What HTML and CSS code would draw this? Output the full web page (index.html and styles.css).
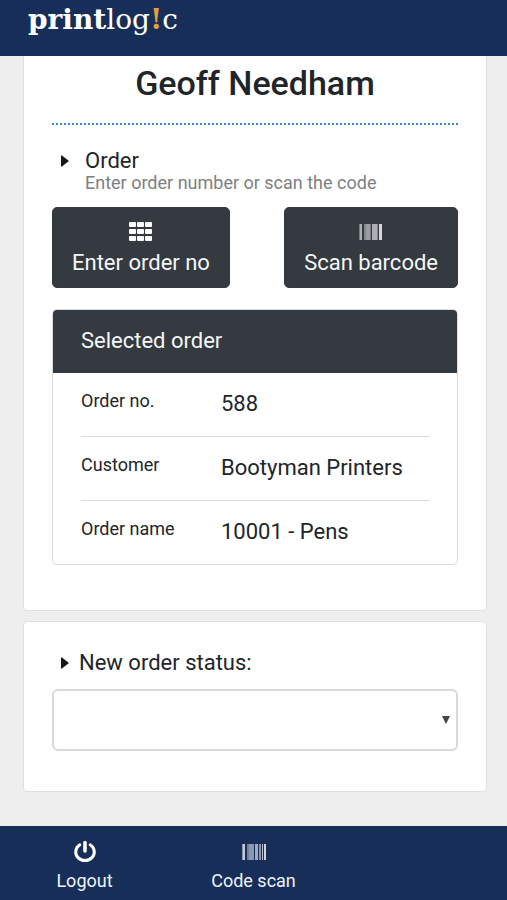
FILE: index.html
```html
<!DOCTYPE html>
<html lang="en">
<head>
<meta charset="utf-8">
<meta name="viewport" content="width=device-width, initial-scale=1">
<title>printlogic</title>
<link rel="stylesheet" href="styles.css">
</head>
<body>
<header class="topbar">
  <a class="logo" href="#"><b>print</b>log<b class="logo-mark">!</b>c</a>
</header>
<main class="content">
  <section class="card card-order">
    <h1 class="user-name">Geoff Needham</h1>
    <div class="step">
      <svg class="caret" viewBox="0 0 8 12" aria-hidden="true"><path d="M0 .8Q0 0 .9 .4L7.4 5.4Q8 6 7.4 6.6L.9 11.6Q0 12 0 11.2Z"/></svg>
      <h2 class="step-title">Order</h2>
      <p class="step-hint">Enter order number or scan the code</p>
    </div>
    <div class="actions">
      <button class="action" type="button">
        <svg class="icon" viewBox="0 0 24 20" aria-hidden="true">
          <g fill="#fff">
            <rect x="0" y="0" width="7" height="5" rx="1"/><rect x="8" y="0" width="7" height="5" rx="1"/><rect x="16" y="0" width="7" height="5" rx="1"/>
            <rect x="0" y="7" width="7" height="5" rx="1"/><rect x="8" y="7" width="7" height="5" rx="1"/><rect x="16" y="7" width="7" height="5" rx="1"/>
            <rect x="0" y="14" width="7" height="5" rx="1"/><rect x="8" y="14" width="7" height="5" rx="1"/><rect x="16" y="14" width="7" height="5" rx="1"/>
          </g>
        </svg>
        <span>Enter order no</span>
      </button>
      <button class="action" type="button">
        <svg class="icon" viewBox="0 0 24 20" aria-hidden="true">
          <g fill="#fff">
            <rect x="0" y="2" width="1" height="16" opacity=".35"/><rect x="1" y="2" width="2" height="16" opacity=".6"/>
            <rect x="5" y="2" width="2" height="16" opacity=".4"/><rect x="7" y="2" width="4" height="16" opacity=".5"/><rect x="11" y="2" width="1" height="16" opacity=".35"/>
            <rect x="13" y="2" width="5" height="16" opacity=".6"/><rect x="18" y="2" width="1" height="16" opacity=".4"/>
            <rect x="20" y="2" width="3" height="16" opacity=".8"/>
          </g>
        </svg>
        <span>Scan barcode</span>
      </button>
    </div>
    <section class="panel">
      <h2 class="panel-title">Selected order</h2>
      <dl class="facts">
        <div class="fact"><dt>Order no.</dt><dd>588</dd></div>
        <div class="fact"><dt>Customer</dt><dd>Bootyman Printers</dd></div>
        <div class="fact"><dt>Order name</dt><dd>10001 - Pens</dd></div>
      </dl>
    </section>
  </section>
  <section class="card card-status">
    <label class="status-label" for="status">
      <svg class="caret" viewBox="0 0 8 12" aria-hidden="true"><path d="M0 .8Q0 0 .9 .4L7.4 5.4Q8 6 7.4 6.6L.9 11.6Q0 12 0 11.2Z"/></svg>
      New order status:
    </label>
    <div class="select-wrap">
      <select class="select" id="status"><option></option></select>
      <svg class="select-arrow" viewBox="0 0 8 8" aria-hidden="true"><path d="M0 0H8L4 8Z"/></svg>
    </div>
  </section>
</main>
<nav class="bottombar">
  <a class="tab" href="#">
    <svg class="icon" viewBox="0 0 24 24" aria-hidden="true"><g fill="none" stroke="#fff" stroke-width="3" stroke-linecap="round"><path d="M6.8 4.8A9.3 8.6 0 1 0 17.2 4.8"/><path d="M12 2.5V11" stroke-width="3.6"/></g></svg>
    <span>Logout</span>
  </a>
  <a class="tab" href="#">
    <svg class="icon" viewBox="0 0 24 24" aria-hidden="true">
      <g fill="#fff">
        <rect x="0" y="4" width="1" height="16" opacity=".5"/><rect x="1" y="4" width="2" height="16" opacity=".75"/>
        <rect x="5" y="4" width="2" height="16" opacity=".4"/><rect x="7" y="4" width="5" height="16" opacity=".5"/>
        <rect x="13" y="4" width="3" height="16" opacity=".6"/><rect x="17" y="4" width="2" height="16" opacity=".5"/>
        <rect x="20" y="4" width="1" height="16" opacity=".7"/><rect x="22" y="4" width="2" height="16" opacity=".8"/>
      </g>
    </svg>
    <span>Code scan</span>
  </a>
</nav>
</body>
</html>
```
FILE: styles.css
```css
* {
  box-sizing: border-box;
}

body {
  margin: 0;
  min-height: 100vh;
  display: flex;
  flex-direction: column;
  background: #eeeeee;
  color: #212529;
  font-family: Roboto, "Liberation Sans", sans-serif;
  font-size: 22px;
  line-height: 24px;
}

h1, h2, p, dl, dd {
  margin: 0;
  font-weight: 400;
}

a {
  color: inherit;
  text-decoration: none;
}

.topbar {
  height: 56px;
  padding: 4px 28px;
  background: #172f58;
  color: #fff;
}

.logo {
  display: inline-block;
  font-family: "DejaVu Serif", serif;
  font-size: 28px;
  line-height: 32px;
}

.logo-mark {
  color: #e9a03c;
}

.content {
  flex: 1;
  display: flex;
  flex-direction: column;
  gap: 10px;
  padding: 0 20px 32px 23px;
}

.card {
  padding: 0 28px;
  background: #fff;
  border: 1px solid #e0e0e0;
  border-radius: 4px;
}

.card-order {
  padding-top: 7px;
  padding-bottom: 45px;
  border-top: 0;
  border-radius: 0 0 4px 4px;
}

.user-name {
  padding-bottom: 20px;
  border-bottom: 2px dotted #3f86c6;
  font-size: 34px;
  line-height: 40px;
  font-weight: 500;
  text-align: center;
}

.step {
  display: grid;
  grid-template-columns: 24px 1fr;
  align-items: center;
  padding: 24px 0 14px 9px;
}

.caret {
  width: 8px;
  height: 12px;
  fill: #16181a;
}

.step-title {
  font-size: 22px;
}

.step-hint {
  grid-column: 2;
  color: #7c8083;
  font-size: 18px;
  line-height: 20px;
}

.actions {
  display: flex;
  justify-content: space-between;
}

.action {
  display: flex;
  flex-direction: column;
  align-items: center;
  gap: 9px;
  padding: 14px 19px 12px;
  border: 1px solid #343a40;
  border-radius: 5px;
  background: #343a40;
  color: #f4f6f8;
  font: inherit;
}

.action .icon {
  width: 24px;
  height: 20px;
}

.panel {
  margin-top: 21px;
  border: 1px solid #d9dbdd;
  border-radius: 5px;
  overflow: hidden;
}

.panel-title {
  padding: 19px 28px 20px;
  background: #343a40;
  color: #f4f6f8;
  font-size: 22px;
}

.facts {
  padding: 0 28px;
}

.fact {
  display: grid;
  grid-template-columns: 140px 1fr;
  padding: 16px 0 18px;
}

.fact + .fact {
  border-top: 1px solid #dcdcdc;
}

.fact dt {
  font-size: 18px;
}

.fact dd {
  padding-top: 1px;
  line-height: 28px;
}

.card-status {
  padding-top: 29px;
  padding-bottom: 40px;
}

.status-label {
  display: flex;
  align-items: center;
  gap: 10px;
  padding-left: 9px;
}

.select-wrap {
  position: relative;
  margin-top: 14px;
}

.select {
  display: block;
  width: 100%;
  height: 62px;
  padding: 0 28px 0 12px;
  appearance: none;
  border: 2px solid #d9d9d9;
  border-radius: 6px;
  background: #fff;
  font: inherit;
}

.select-arrow {
  position: absolute;
  right: 8px;
  top: 27px;
  width: 8px;
  height: 8px;
  fill: #444;
  pointer-events: none;
}

.bottombar {
  display: grid;
  grid-template-columns: repeat(3, 1fr);
  height: 74px;
  padding-top: 14px;
  background: #172f58;
  color: #f0f4fa;
  font-size: 18px;
}

.tab {
  display: flex;
  flex-direction: column;
  align-items: center;
  gap: 5px;
}

.tab .icon {
  width: 24px;
  height: 24px;
}
```
